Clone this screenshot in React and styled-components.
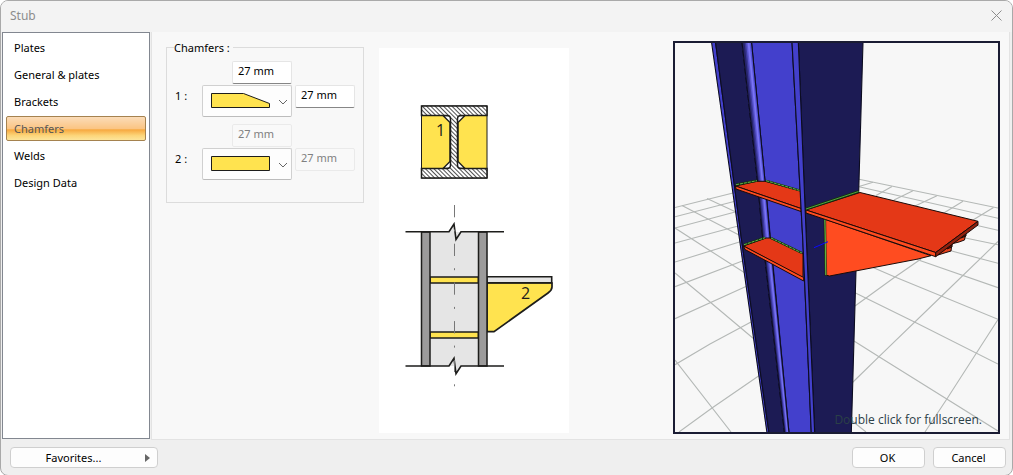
import React, { useState } from "react";
import styled, { createGlobalStyle, css } from "styled-components";

const GlobalStyle = createGlobalStyle`
  *, *::before, *::after {
    box-sizing: border-box;
  }

  body {
    margin: 0;
    background-color: #fff;
    font-family: "Noto Sans", "Open Sans", sans-serif;
    font-size: 11px;
    color: #000;
  }

  button, input, select {
    font: inherit;
    color: inherit;
  }
`;

const Dialog = styled.form`
  display: grid;
  grid-template-rows: 31px 1fr 35px;
  min-height: 100vh;
  border: 1px solid #a9a9a9;
  border-radius: 8px;
  background-color: #efefef;
  overflow: hidden;
`;

const TitleBar = styled.header`
  display: flex;
  align-items: center;
  justify-content: space-between;
  padding: 0 10px 2px 9px;
  background-color: #f3f3f3;
`;

const Title = styled.h1`
  margin: 0;
  font-size: 12px;
  font-weight: 400;
  color: #8c8c8c;
`;

const CloseButton = styled.button`
  display: flex;
  padding: 0;
  border: none;
  background: none;
  color: #8c8c8c;
`;

const Body = styled.div`
  display: grid;
  grid-template-columns: 148px 1fr;
  column-gap: 1px;
  padding: 0 2px 0 1px;
`;

const Sidebar = styled.nav`
  display: flex;
  flex-direction: column;
  gap: 2px;
  margin-bottom: 1px;
  padding: 2px 3px;
  border: 1px solid #828790;
  background-color: #fff;
`;

const Tab = styled.button`
  height: 25px;
  padding: 0 7px;
  border: 1px solid transparent;
  border-radius: 2px;
  background: none;
  text-align: left;

  ${(props) =>
    props.$active &&
    css`
      border-color: #a5824f;
      background: linear-gradient(
        #fbdcb8 0%,
        #fbc584 50%,
        #f7a940 56%,
        #fcd579 80%,
        #fde59a 100%
      );
      color: #555;
    `}
`;

const Content = styled.main`
  display: flex;
  align-items: stretch;
  gap: 15px;
  padding: 9px 9px 5px 14px;
  border: 1px solid #e3e3e3;
  border-top: none;
  background-color: #f8f8f8;
`;

const Group = styled.fieldset`
  align-self: flex-start;
  flex: none;
  width: 198px;
  height: 162px;
  margin: 0;
  padding: 7px 8px 0;
  border: 1px solid #dcdcdc;
`;

const Legend = styled.legend`
  padding: 0 3px 0 0;
  margin-left: -1px;
  line-height: 13px;
`;

const ChamferGrid = styled.div`
  display: grid;
  grid-template-columns: 24px 90px 60px;
  grid-template-rows: 23px 32px;
  gap: 1px 3px;
  grid-template-areas:
    ". top ."
    "label shape side";
  margin-bottom: 7px;
`;

const RowLabel = styled.label`
  grid-area: label;
  align-self: start;
  line-height: 21px;
`;

const SizeInput = styled.input`
  grid-area: ${(props) => props.$area};
  justify-self: end;
  width: 60px;
  height: 23px;
  padding: 0 5px 4px;
  border: 1px solid #e5e5e5;
  border-bottom-color: #868686;
  border-radius: 2px;
  background-color: #fff;

  &:disabled {
    border-color: #eaeaea;
    background-color: #f9f9f9;
    color: #808080;
  }
`;

const ShapeBox = styled.div`
  grid-area: shape;
  display: grid;
  border: 1px solid #d0d0d0;
  border-bottom-color: #bcbcbc;
  border-radius: 2px;
  background-color: #fdfdfd;

  > * {
    grid-area: 1 / 1;
  }
`;

const ShapeSelect = styled.select`
  width: 100%;
  height: 100%;
  border: none;
  background: none;
  appearance: none;
`;

const Drawing = styled.svg`
  flex: none;
  width: 190px;
  margin-top: 7px;
  margin-bottom: 1px;
  background-color: #fff;
  font-family: "Open Sans", sans-serif;
  font-size: 16px;
`;

const Viewer = styled.figure`
  position: relative;
  flex: 1;
  min-width: 300px;
  margin: 0 0 0 89px;
  border: 2px solid #1a1c33;
  background-color: #f7f7f7;
`;

const Scene = styled.svg`
  display: block;
  width: 100%;
  height: 100%;
`;

const Hint = styled.figcaption`
  position: absolute;
  right: 16px;
  bottom: 4px;
  font-family: "Open Sans", sans-serif;
  font-size: 12px;
  line-height: 17px;
  color: #2b4047;
`;

const Footer = styled.footer`
  display: flex;
  align-items: flex-start;
  gap: 8px;
  padding: 7px 6px 0 9px;
`;

const Button = styled.button`
  width: 73px;
  height: 21px;
  padding: 0 2px 0 0;
  border: 1px solid #cfcfcf;
  border-radius: 4px;
  background-color: #fdfdfd;
`;

const FavoritesButton = styled(Button)`
  display: flex;
  align-items: center;
  width: 148px;
  margin-right: auto;
  padding: 0 7px;

  span {
    flex: 1;
    padding-right: 16px;
    text-align: center;
  }
`;

const tabs = [
  "Plates",
  "General & plates",
  "Brackets",
  "Chamfers",
  "Welds",
  "Design Data",
];

const shapes = {
  bevel: "M8.5 7.5h32l26 10v4h-58z",
  none: "M8.5 7.5h58v14h-58z",
};

function ShapePicker({ id, value, onChange }) {
  return (
    <ShapeBox>
      <svg width="88" height="30" aria-hidden="true">
        <path d={shapes[value]} fill="#ffe34f" stroke="#1d1d1b" />
        <path d="M76 14l4 4 4-4" fill="none" stroke="#666" />
      </svg>
      <ShapeSelect
        id={id}
        value={value}
        onChange={(e) => onChange(e.target.value)}
      >
        <option value="bevel" aria-label="Bevelled" />
        <option value="none" aria-label="Straight" />
      </ShapeSelect>
    </ShapeBox>
  );
}

function ChamferRow({ index, initialShape }) {
  const [shape, setShape] = useState(initialShape);
  const [top, setTop] = useState("27 mm");
  const [side, setSide] = useState("27 mm");
  const id = `chamfer-${index}`;
  const disabled = shape === "none";

  return (
    <ChamferGrid>
      <SizeInput
        $area="top"
        aria-label={`Chamfer ${index} length`}
        value={top}
        disabled={disabled}
        onChange={(e) => setTop(e.target.value)}
      />
      <RowLabel htmlFor={id}>{index} :</RowLabel>
      <ShapePicker id={id} value={shape} onChange={setShape} />
      <SizeInput
        $area="side"
        aria-label={`Chamfer ${index} height`}
        value={side}
        disabled={disabled}
        onChange={(e) => setSide(e.target.value)}
      />
    </ChamferGrid>
  );
}

function SectionDrawing() {
  return (
    <Drawing viewBox="379 48 190 385" preserveAspectRatio="xMidYMin meet">
      <defs>
        <pattern
          id="hatch"
          width="3"
          height="3"
          patternUnits="userSpaceOnUse"
          patternTransform="rotate(-45)"
        >
          <rect width="3" height="3" fill="#fff" />
          <path d="M1.5 0v3" stroke="#222" strokeWidth="0.8" />
        </pattern>
      </defs>

      {/* cross section */}
      <path d="M421.5 106h65.5v72h-65.5z" fill="#ffe34f" stroke="#1d1d1b" />
      <path
        d="M443 115.5h22l-7 7v39l7 7h-22l7-7v-39z"
        fill="#fff"
        stroke="#1d1d1b"
        strokeWidth="1.4"
      />
      <path
        d="M421.5 106h65.5v9.5h-26q-3.5 0-3.5 3.5v46q0 3.5 3.5 3.5h26v9.5h-65.5v-9.5h25.5q3.5 0 3.5-3.5v-46q0-3.5-3.5-3.5h-25.5z"
        fill="url(#hatch)"
        stroke="#1d1d1b"
        strokeWidth="1.5"
      />
      <text x="436" y="136" fill="#1d1d1b">
        1
      </text>

      {/* elevation */}
      <path d="M421.5 232h66v134h-66z" fill="#e5e5e5" />
      <path
        d="M430 277h48.5v6h-48.5zM430 332h48.5v6h-48.5z"
        fill="#ffe34f"
        stroke="#1d1d1b"
        strokeWidth="1.7"
      />
      <path
        d="M487 283h65v4q0 3-4 6l-54 38.7h-7z"
        fill="#ffe34f"
        stroke="#1d1d1b"
        strokeWidth="1.7"
      />
      <path
        d="M487 276.7h64.7v6h-64.7z"
        fill="#e5e5e5"
        stroke="#1d1d1b"
        strokeWidth="1.6"
      />
      <path
        d="M421.5 232h8.5v134h-8.5zM478.5 232h8.5v134h-8.5z"
        fill="#9c9b9b"
        stroke="#1d1d1b"
        strokeWidth="1.5"
      />
      <path
        d="M449 232l5-8 2 15.5 5-7.5v3h-12zM449 366l5-8 2 15.5 5-7.5z"
        fill="#e5e5e5"
      />
      <path
        d="M405.5 231.7H449l5-7.7 2 15.5 5-7.8h43M405.5 366H449l5-7.7 2 15.5 5-7.8h43"
        fill="none"
        stroke="#1d1d1b"
        strokeWidth="1.6"
      />
      <path
        d="M454.5 205v182"
        stroke="#777"
        strokeDasharray="12.3 12.2 2 12.2"
      />
      <text x="521" y="299" fill="#1d1d1b">
        2
      </text>
    </Drawing>
  );
}

function StubScene() {
  return (
    <Scene viewBox="675 43 323 389" preserveAspectRatio="xMidYMid slice">
      {/* floor grid */}
      <g fill="none" stroke="#b4b8b6" strokeWidth="1.1">
        <path d="M675 207.5L734 192.7M675 216.7L735 201.3M675 228L737 211.5M675 243L739 225.7M675 262L741 241.5M675 286.7L743 260.7M675 318.7L747 286M675 364.7L710 344L751 322M679 432L712 408L760 375" />
        <path d="M675 360L731 432M675 273L710 302L754 339M675 228L709 250L745 273M682 205.5L708 219L739 235M707 198.5L737 212.5" />
        <path d="M859 179.3L998 208M859 186.7L998 218.3M975 225L998 230.3M963 237.5L998 244.7M946 249.5L998 263.3M917 259.5L998 287.7M873 267.5L895 277L998 319.3M855 292.7L915 322.3L998 364M854 341L879 356.7L998 431M851 420L866 432" />
        <path d="M859 186.5L873 182.3M876 195.5L892 186.5M894 200L913 190.7M915 206L937 195.7M943 213.5L963 201.3M973 220L993.5 207.5M855 306L895 277L921 259M852 383L879 356.7L941.7 296L998 241.5M925 432L947 398.7L998 319.5" />
      </g>

      {/* column */}
      <g stroke="#0c0c20" strokeWidth="1.1">
        <path d="M711.5 42L715.5 42L741.3 238L769 433L767 433L739.3 238z" fill="#4340cc" />
        <path d="M715.5 42L742 42L757.5 181L762.7 238L784.5 433L769 433L741.3 238z" fill="#1c1b54" />
        <path d="M751.5 42L792 42L802.7 238L811.3 433L789 433L765 181z" fill="#4340cc" />
        <path d="M798.3 42L863 42L858.7 192L856 270L851.3 433L814.7 433L806.3 238z" fill="#1c1b54" />
      </g>

      {/* rolled fillet between flange and web */}
      <path d="M742 42L751.5 42L765 181L770 238L789 433L784.5 433L762.7 238L757.5 181z" fill="#5451da" />
      <path d="M742 42L749.5 42L763.3 181L768.4 238L788 433L784.5 433L762.7 238L757.5 181z" fill="#7a74f4" />
      <path d="M742 42L747.5 42L761.6 181L766.8 238L787 433L784.5 433L762.7 238L757.5 181z" fill="#5a55d0" />
      <path d="M742 42L746 42L760.4 181L765.5 238L786.2 433L784.5 433L762.7 238L757.5 181z" fill="#3c399a" />
      <path d="M742 42L744.5 42L759 181L764.2 238L785.5 433L784.5 433L762.7 238L757.5 181z" fill="#26246a" />
      <path
        d="M742 42L757.5 181L762.7 238L784.5 433M751.5 42L765 181L770 238L789 433"
        fill="none"
        stroke="#0c0c20"
        strokeWidth="1.1"
      />

      {/* stiffeners */}
      <g stroke="#1a0a08">
        <path d="M735.5 186L757 181.3H765L801 191V208.5z" fill="#e43817" />
        <path d="M735.5 186L801 208.5V211.5L736 189z" fill="#ff4c20" />
        <path d="M743.5 246L766 238H770L803 253.5V278z" fill="#e43817" />
        <path d="M743.5 246L803.7 277.5V281L745 249.5z" fill="#ff4c20" />
      </g>
      <path
        d="M736 184.7L757 180.7M766 180.7L800 190.5M744 244.7L765 237.7M771 238L802 253"
        stroke="#16330f"
        strokeWidth="2.2"
      />
      <path
        d="M736 184.7L757 180.7M766 180.7L800 190.5M744 244.7L765 237.7M771 238L802 253"
        stroke="#62b34c"
        strokeDasharray="3 1"
      />
      <path
        d="M792 42L798.3 42L806.3 238L814.7 433L811.3 433L802.7 238z"
        fill="#4340cc"
        stroke="#0c0c20"
        strokeWidth="1.1"
      />

      {/* bracket */}
      <g stroke="#1a0a08">
        <path d="M938 255L948 243H952L951 251L946 252.5z" fill="#e5421c" />
        <path d="M951 244L962 232H966L964.5 240L959 242z" fill="#e5421c" />
        <path d="M948.5 242H952V247L947 249zM962 231.5H966V236L961 238z" fill="#5c1408" />
        <path d="M824.5 219L931 255.7L918 259L829.5 276L825.5 275z" fill="#ff4c20" />
        <path d="M806 210L860 192.5L978 221.3L935.7 252.5z" fill="#e43817" />
        <path d="M806 210L935.7 252.5V256.7L806 213z" fill="#ff4c20" />
        <path d="M935.7 252.5L978 221.3V225L935.7 256.7z" fill="#8f210e" />
        <path d="M824 219.5H825.7L826.7 275.5H825z" fill="#68d84c" strokeWidth="0.6" />
      </g>
      <path d="M806 209L858.5 191.5" stroke="#16330f" strokeWidth="2.4" />
      <path d="M806 209L858.5 191.5" stroke="#4fa23e" />
      <path d="M814 247.7L828 241.7" stroke="#0a0aff" />
    </Scene>
  );
}

export default function App() {
  const [activeTab, setActiveTab] = useState("Chamfers");

  return (
    <>
      <GlobalStyle />
      <Dialog onSubmit={(e) => e.preventDefault()}>
        <TitleBar>
          <Title>Stub</Title>
          <CloseButton type="button" aria-label="Close">
            <svg width="11" height="11" aria-hidden="true">
              <path d="M.5.5l10 10M10.5.5l-10 10" stroke="currentColor" />
            </svg>
          </CloseButton>
        </TitleBar>

        <Body>
          <Sidebar>
            {tabs.map((tab) => (
              <Tab
                key={tab}
                type="button"
                $active={tab === activeTab}
                onClick={() => setActiveTab(tab)}
              >
                {tab}
              </Tab>
            ))}
          </Sidebar>

          <Content>
            <Group>
              <Legend>Chamfers :</Legend>
              <ChamferRow index={1} initialShape="bevel" />
              <ChamferRow index={2} initialShape="none" />
            </Group>
            <SectionDrawing />
            <Viewer>
              <StubScene />
              <Hint>Double click for fullscreen.</Hint>
            </Viewer>
          </Content>
        </Body>

        <Footer>
          <FavoritesButton type="button">
            <span>Favorites...</span>
            <svg width="5" height="8" aria-hidden="true">
              <path d="M0 0l5 4-5 4z" fill="#666" />
            </svg>
          </FavoritesButton>
          <Button type="submit">OK</Button>
          <Button type="button">Cancel</Button>
        </Footer>
      </Dialog>
    </>
  );
}
